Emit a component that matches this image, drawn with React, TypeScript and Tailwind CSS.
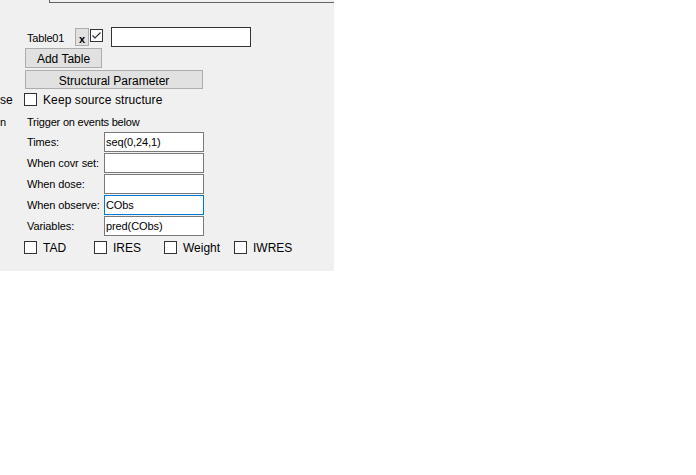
import React from "react";

function Box({ checked = false }: { checked?: boolean }) {
    return (
        <div className="w-[13px] h-[13px] border border-[#333333] bg-white flex items-center justify-center shrink-0">
            {checked && (
                <svg width="11" height="11" viewBox="0 0 11 11">
                    <path d="M1.5 5.5 L4 8 L9.5 2.5" fill="none" stroke="#333333" strokeWidth="1.2" />
                </svg>
            )}
        </div>
    );
}

function Field({ label, value = "", focused = false }: { label: string; value?: string; focused?: boolean }) {
    return (
        <div className="flex items-center h-[20px] mt-[1px] first:mt-0">
            <span className="ml-[27px] w-[77px] text-[11px] tracking-[-0.1px] text-black">{label}</span>
            <div
                className={
                    focused
                        ? "w-[100px] h-[20px] bg-white border border-[#0078d7] flex items-center pl-[1px] text-[11px] tracking-[-0.1px] text-black"
                        : "w-[100px] h-[20px] bg-white border border-[#7a7a7a] flex items-center pl-[1px] text-[11px] tracking-[-0.1px] text-black"
                }
            >
                {value}
            </div>
        </div>
    );
}

function Check({ label }: { label: string }) {
    return (
        <div className="w-[70px] flex items-center">
            <Box />
            <span className="ml-[6px] pt-[1px] text-[12px] text-black leading-[13px]">{label}</span>
        </div>
    );
}

export default function App() {
    return (
        <div className="w-[696px] h-[475px] bg-white" style={{ fontFamily: '"Liberation Sans", Arial, sans-serif' }}>
            <div className="w-[334px] h-[271px] bg-[#f0f0f0] flex flex-col">
                <div className="ml-[49px] h-[3px] border-l border-b border-[#646464]" />

                <div className="mt-[24px] flex items-start h-[20px]">
                    <span className="ml-[27px] mt-[5px] w-[48px] text-[11px] leading-[13px] tracking-[-0.2px] text-black">Table01</span>
                    <div className="mt-[1px] w-[14px] h-[18px] bg-[#e1e1e1] border border-[#adadad] flex items-end justify-center">
                        <span className="text-[11px] leading-[12px] font-bold text-black">x</span>
                    </div>
                    <div className="mt-[2px] ml-[1px]">
                        <Box checked />
                    </div>
                    <div className="ml-[8px] w-[140px] h-[20px] bg-white border border-[#333333]" />
                </div>

                <button className="mt-[1px] ml-[25px] w-[77px] h-[20px] pt-[2px] bg-[#e1e1e1] border border-[#adadad] text-[12px] text-black flex items-center justify-center">
                    Add Table
                </button>
                <button className="mt-[2px] ml-[25px] w-[178px] h-[19px] pt-[2px] bg-[#e1e1e1] border border-[#adadad] text-[12px] text-black flex items-center justify-center">
                    Structural Parameter
                </button>

                <div className="mt-[4px] flex items-center h-[13px]">
                    <span className="w-[24px] pt-[1px] text-[12px] text-black overflow-hidden">se</span>
                    <Box />
                    <span className="ml-[6px] pt-[1px] text-[12px] tracking-[0.1px] text-black">Keep source structure</span>
                </div>

                <div className="mt-[10px] flex items-center h-[13px]">
                    <span className="w-[27px] text-[11px] text-black">n</span>
                    <span className="text-[11px] tracking-[-0.2px] text-black">Trigger on events below</span>
                </div>

                <div className="mt-[3px] flex flex-col">
                    <Field label="Times:" value="seq(0,24,1)" />
                    <Field label="When covr set:" />
                    <Field label="When dose:" />
                    <Field label="When observe:" value="CObs" focused />
                    <Field label="Variables:" value="pred(CObs)" />
                </div>

                <div className="mt-[5px] ml-[24px] flex h-[13px]">
                    <Check label="TAD" />
                    <Check label="IRES" />
                    <Check label="Weight" />
                    <Check label="IWRES" />
                </div>
            </div>
        </div>
    );
}
